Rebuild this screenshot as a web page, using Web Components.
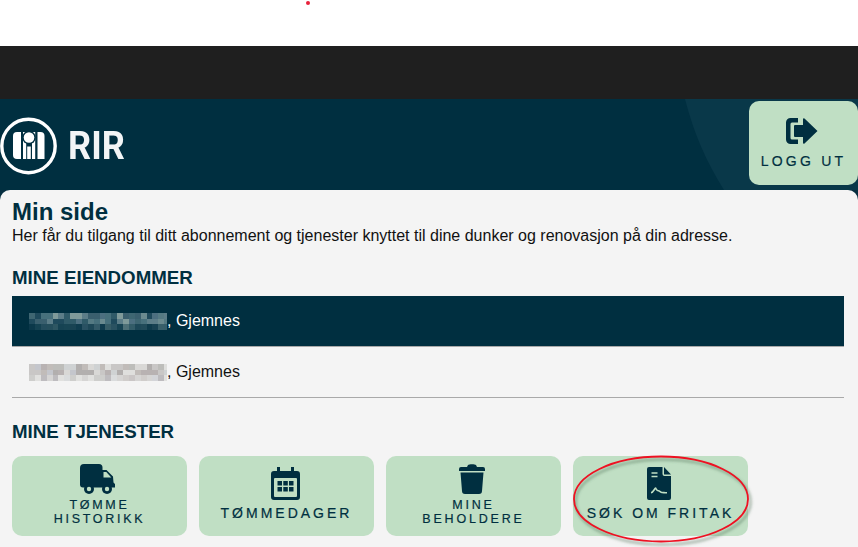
<!DOCTYPE html>
<html lang="no"><head><meta charset="utf-8"><title>Min side</title>
<style>
html,body{margin:0;padding:0;background:#fff}
body{width:858px;height:547px;overflow:hidden;position:relative;font-family:"Liberation Sans",Arial,sans-serif}
</style></head><body>
<rir-page></rir-page>
<script>
const C='#002f40', G='#c0dfc4';
class RirLogo extends HTMLElement{connectedCallback(){this.attachShadow({mode:'open'}).innerHTML=`<style>:host{display:flex;align-items:center;gap:10px;margin-top:3px}
span{font:700 38px/1 Roboto,"Liberation Sans",sans-serif;color:#f2f5f6;letter-spacing:0;transform:scaleX(.95);transform-origin:left}</style>
<svg width="58" height="58" viewBox="0 0 58 58"><circle cx="28.500" cy="29" r="26.700" fill="none" stroke="#fff" stroke-width="3.400"/>
<path fill="#fff" d="M17 15h4v27h-4a4 4 0 0 1-4-4V19a4 4 0 0 1 4-4z"/><rect x="23" y="15" width="3.200" height="27" fill="#fff"/><rect x="32" y="15" width="3.200" height="27" fill="#fff"/><path fill="#fff" d="M37.500 15h3a4 4 0 0 1 4 4v23h-7z"/><rect x="27.200" y="29.500" width="3.600" height="12.500" fill="#fff"/><circle cx="29" cy="20.500" r="6.800" fill="${C}"/><circle cx="29" cy="20.500" r="5.300" fill="#fff"/></svg><span>RIR</span>`}}
customElements.define('rir-logo',RirLogo);

const ICONS={
logout:`<svg width="32" height="26" viewBox="0 0 32 26"><path fill="${C}" d="M4.500 0H12v4.500H6a1.500 1.500 0 0 0-1.500 1.500v14A1.500 1.500 0 0 0 6 21.500h6V26H4.500A4.500 4.500 0 0 1 0 21.500v-17A4.500 4.500 0 0 1 4.500 0z"/><path fill="${C}" d="M18.500.5L31.500 13 18.500 25.500a1 1 0 0 1-1.500-.8V19H9a1 1 0 0 1-1-1V8a1 1 0 0 1 1-1h8V1.300a1 1 0 0 1 1.500-.8z"/></svg>`,
truck:`<svg width="36" height="30" viewBox="0 0 36 30"><path fill="${C}" d="M4 0h15a3.500 3.500 0 0 1 3.500 3.500V6h4l6.500 6.500.5 6 1.500 1.500v3.500H3a3 3 0 0 1-3-3V4a4 4 0 0 1 4-4z"/><path fill="${G}" d="M23.500 8h2.800l5 5.500h-7.800z"/><circle cx="9" cy="25" r="5" fill="${C}"/><circle cx="9" cy="25" r="2.200" fill="${G}"/><circle cx="27" cy="25" r="5" fill="${C}"/><circle cx="27" cy="25" r="2.200" fill="${G}"/></svg>`,
calendar:`<svg width="29" height="33" viewBox="0 0 29 33"><path fill="${C}" d="M6 0h3v4h11V0h3v4h3a3 3 0 0 1 3 3v23a3 3 0 0 1-3 3H3a3 3 0 0 1-3-3V7a3 3 0 0 1 3-3h3z"/><rect x="3" y="11" width="23" height="19" rx="1" fill="${G}"/><g fill="${C}"><rect x="6.500" y="14" width="4.500" height="4.500"/><rect x="12.300" y="14" width="4.500" height="4.500"/><rect x="18" y="14" width="4.500" height="4.500"/><rect x="6.500" y="20" width="4.500" height="4.500"/><rect x="12.300" y="20" width="4.500" height="4.500"/><rect x="18" y="20" width="4.500" height="4.500"/></g></svg>`,
trash:`<svg width="26" height="30" viewBox="0 0 26 30"><path fill="${C}" d="M9 1C10 0 16 0 17 1l1 2h6a2 2 0 0 1 2 2v2H0V5a2 2 0 0 1 2-2h6z"/><path fill="${C}" d="M1.500 8.500h23L23 27a3 3 0 0 1-3 3H6a3 3 0 0 1-3-3z"/></svg>`,
file:`<svg width="24" height="33" viewBox="0 0 24 33"><path fill="${C}" d="M2 0h13.500v7a2 2 0 0 0 2 2H24v22a2 2 0 0 1-2 2H2a2 2 0 0 1-2-2V2a2 2 0 0 1 2-2z"/><path fill="${C}" d="M17 0L24 7.500H17.500a.5.5 0 0 1-.5-.5z"/><path fill="none" stroke="${G}" stroke-width="1.400" d="M4.500 6h6M4.500 9.500h6"/><path fill="none" stroke="${G}" stroke-width="1.600" stroke-linejoin="round" d="M4 25.800c2-.2 3-3.300 4.500-4.800 1 1.500 1.500 2.800 2.800 2.800 1.700 0 2 1.700 3.700 1.700 1.500 0 2.500.3 5 .3"/></svg>`};

class RirIconButton extends HTMLElement{connectedCallback(){const sp=this.getAttribute('spacing')||'3px';const gap=this.getAttribute('gap')||'5px';const pad=this.getAttribute('pad')||'0';const fs=this.getAttribute('size')||'14px';
this.attachShadow({mode:'open'}).innerHTML=`<style>:host{display:flex;flex-direction:column;align-items:center;justify-content:flex-start;box-sizing:border-box;gap:${gap};padding-top:${pad};background:${G};border-radius:10px;color:${C};font:400 ${fs}/14px "Liberation Sans",Arial,sans-serif;letter-spacing:${sp};text-align:center;-webkit-text-stroke:.2px ${C}}
svg{display:block;flex:none;margin-left:-3px}.t{display:block}</style>${ICONS[this.getAttribute('icon')]}<span class="t"><slot></slot></span>`}}
customElements.define('rir-icon-button',RirIconButton);

class RirHeader extends HTMLElement{connectedCallback(){this.attachShadow({mode:'open'}).innerHTML=`<style>:host{display:flex;position:relative;height:91px;box-sizing:border-box;background:${C};padding-top:2px;justify-content:space-between;overflow:hidden}
.curve{position:absolute;inset:0;width:100%;height:100%}
rir-logo{position:relative;height:84px}
rir-icon-button{position:relative;width:109px;height:84px}</style>
<svg class="curve" viewBox="0 0 858 91" preserveAspectRatio="none"><path fill="#093849" d="M685 0C694 35 706 62 724 91H858V0z"/></svg>
<rir-logo></rir-logo><rir-icon-button icon="logout" spacing="3.200px" gap="10px" pad="17px">LOGG UT</rir-icon-button>`}}
customElements.define('rir-header',RirHeader);

class RirMosaic extends HTMLElement{connectedCallback(){const dark=this.hasAttribute('dark');
const pal=dark?['#3e6672','#557a83','#47707c','#2f5a68','#6a8a8f','#5c7d88','#3a5f6e','#7f9a9a','#4c6f80','#1f4a5c']:['#c9c7c6','#bdbdba','#d9d8d6','#b8b2b2','#c4c6cc','#a6a4a8','#dfdfdd','#c1bcb9','#cfd2d3','#b2afae'];
let r='',s=dark?7:19;const rnd=()=>{s=(s*16807)%2147483647;return s/2147483647};
const w=5.875;
for(let y=0;y<3;y++)for(let x=0;x<24;x++){let c=pal[Math.floor(rnd()*pal.length)];let o=1;
 if(y==2){o=dark?.35+rnd()*.3:.7}
 r+=`<rect x="${x*w}" y="${y*5.600}" width="${w}" height="5.600" fill="${c}" opacity="${o}"/>`}
this.attachShadow({mode:'open'}).innerHTML=`<style>:host{display:inline-block;width:138px;height:17px;overflow:hidden;vertical-align:-4px}svg{display:block}</style><svg width="141" height="17" shape-rendering="crispEdges">${r}</svg>`}}
customElements.define('rir-mosaic',RirMosaic);

class RirProperty extends HTMLElement{connectedCallback(){const a=this.hasAttribute('active');
this.attachShadow({mode:'open'}).innerHTML=`<style>:host{display:flex;align-items:center;box-sizing:border-box;height:51px;padding:0 0 0 17px;font:400 16px/18px "Liberation Sans",Arial,sans-serif;white-space:nowrap;background:${a?C:'transparent'};color:${a?'#fff':'#111'};border-bottom:1px solid #a9a9a9}
</style><span><rir-mosaic ${a?'dark':''}></rir-mosaic>, <slot></slot></span>`}}
customElements.define('rir-property',RirProperty);

class RirSection extends HTMLElement{connectedCallback(){this.attachShadow({mode:'open'}).innerHTML=`<style>:host{display:block}h2{margin:0;font:700 18.720px/20px "Liberation Sans",Arial,sans-serif;color:${C}}</style><h2>${this.getAttribute('heading')}</h2><slot></slot>`}}
customElements.define('rir-section',RirSection);

class RirPage extends HTMLElement{connectedCallback(){this.attachShadow({mode:'open'}).innerHTML=`<style>:host{display:block;height:547px;overflow:hidden;position:relative}
.white{height:46px}.bar{height:53px;background:#1f1f1f}
main{background:#f4f4f4;border-radius:10px 10px 0 0;height:357px;box-sizing:border-box;padding:9px 14px 0 12px;color:${C};margin-top:0}
.wrap{background:#062f40}
h1{margin:0;font:700 24px/25px "Liberation Sans",Arial,sans-serif;color:${C}}
p{margin:2px 0 23px;font:400 16px/19px "Liberation Sans",Arial,sans-serif;color:#111;white-space:nowrap}
.list{margin-top:8px;margin-bottom:24px}
.btns{display:flex;gap:12px;margin-top:14px}
rir-icon-button{width:175px;height:80px}
.dot{position:absolute;left:306px;top:1px;width:4px;height:4px;border-radius:50%;background:#e8213a}
.ring{position:absolute;left:570px;top:454px;overflow:visible}</style>
<div class="white"></div><div class="bar"></div><rir-header></rir-header>
<div class="wrap"><main><h1>Min side</h1><p>Her får du tilgang til ditt abonnement og tjenester knyttet til dine dunker og renovasjon på din adresse.</p>
<rir-section heading="MINE EIENDOMMER"><div class="list"><rir-property active>Gjemnes</rir-property><rir-property>Gjemnes</rir-property></div></rir-section>
<rir-section heading="MINE TJENESTER"><div class="btns">
<rir-icon-button icon="truck" size="12.500px" pad="8px" gap="4px" spacing="2.700px">TØMME<br>HISTORIKK</rir-icon-button>
<rir-icon-button icon="calendar" pad="11px" gap="6px" spacing="3px">TØMMEDAGER</rir-icon-button>
<rir-icon-button icon="trash" size="12.500px" pad="8px" gap="4px" spacing="2.800px">MINE<br>BEHOLDERE</rir-icon-button>
<rir-icon-button icon="file" pad="11px" gap="6px" spacing="3px">SØK OM FRITAK</rir-icon-button>
</div></rir-section></main></div>
<div class="dot"></div>
<svg class="ring" width="190" height="95" viewBox="0 0 190 95"><defs><filter id="s" x="-10%" y="-10%" width="125%" height="130%"><feGaussianBlur stdDeviation="1.800"/></filter></defs>
<ellipse cx="91" cy="45" rx="87.500" ry="42.500" fill="none" stroke="#4f6f55" stroke-opacity=".6" stroke-width="2" transform="translate(2 3)" filter="url(#s)"/>
<ellipse cx="91" cy="45" rx="87" ry="42.500" fill="none" stroke="#ee1122" stroke-width="1.800"/></svg>`}}
customElements.define('rir-page',RirPage);
</script></body></html>
